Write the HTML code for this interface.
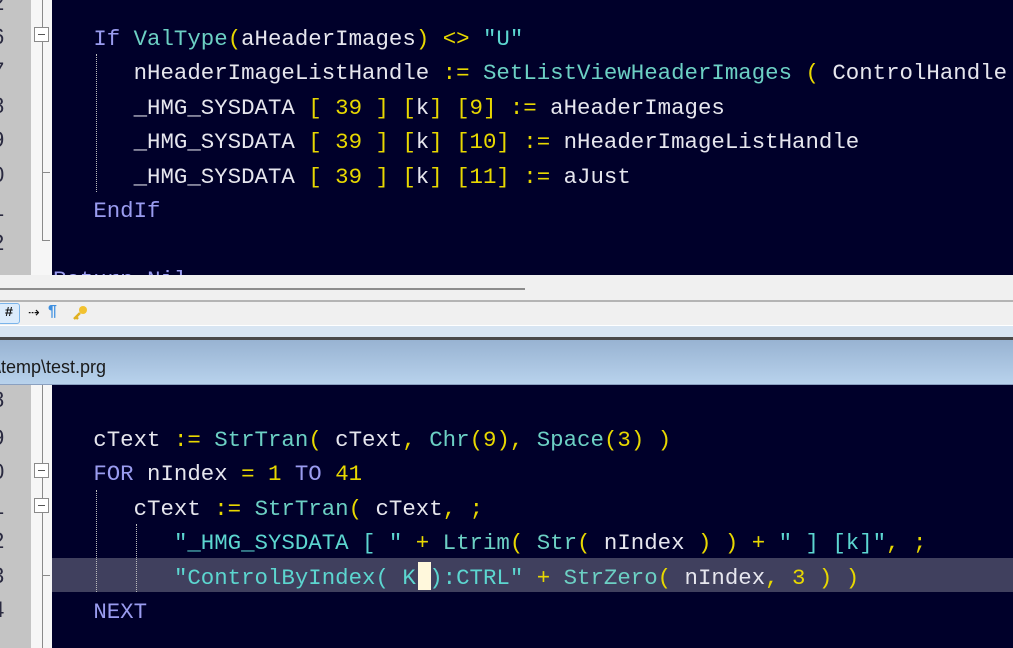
<!DOCTYPE html>
<html><head><meta charset="utf-8"><style>
*{margin:0;padding:0;box-sizing:border-box}
body{width:1013px;height:648px;overflow:hidden;position:relative;background:#f0f0f0;font-family:"Liberation Mono",monospace}
.ed{position:absolute;left:0;width:1013px;background:#00002a;overflow:hidden}
.gut{position:absolute;left:0;top:0;bottom:0;width:31px;background:#c4c4c4}
.fold{position:absolute;left:31px;top:0;bottom:0;width:21px;background:#f6f6f6}
.fl{position:absolute;left:42px;width:1px;background:#8a8a8a}
.fb{position:absolute;left:34px;width:15px;height:15px;border:1px solid #8a8a8a;background:#fff}
.fb:after{content:"";position:absolute;left:3px;top:6px;width:7px;height:1px;background:#555}
.tick{position:absolute;left:42px;width:8px;height:1px;background:#8a8a8a}
.ln{position:absolute;left:53px;height:34.4px;line-height:34.4px;font-size:22.4px;white-space:pre;color:#e6e6ee;margin-top:2px}
.num{position:absolute;left:-8px;font-size:22px;color:#2a2a40;line-height:34.4px;font-family:"Liberation Sans",sans-serif}
.k{color:#9a9cf0}.f{color:#6cd0c4}.o{color:#e8d800}.s{color:#5cd6d0}.n{color:#e8d800}
.g{position:absolute;width:0;border-left:1px dotted #bbb}
</style></head><body>

<div class="ed" style="top:0;height:275px">
  <div class="gut"></div><div class="fold"></div>
  <div class="fl" style="top:0;height:27px"></div>
  <div class="fb" style="top:27px"></div>
  <div class="fl" style="top:42px;height:198px"></div>
  <div class="tick" style="top:240px"></div>
  <div class="fl" style="top:172px;height:1px;width:8px"></div>
  <div class="num" style="top:-14px">2</div><div class="num" style="top:20px">6</div><div class="num" style="top:54px">7</div><div class="num" style="top:89px">8</div><div class="num" style="top:123px">9</div><div class="num" style="top:158px">0</div><div class="num" style="top:192px">1</div><div class="num" style="top:226px">2</div>
  <div class="g" style="left:96px;top:54px;height:138px"></div>
  <div class="ln" style="top:20px">   <span class="k">If</span> <span class="f">ValType</span><span class="o">(</span>aHeaderImages<span class="o">)</span> <span class="o">&lt;&gt;</span> <span class="s">"U"</span></div>
  <div class="ln" style="top:54.4px">      nHeaderImageListHandle <span class="o">:=</span> <span class="f">SetListViewHeaderImages</span> <span class="o">(</span> ControlHandle</div>
  <div class="ln" style="top:88.8px">      _HMG_SYSDATA <span class="o">[</span> <span class="n">39</span> <span class="o">]</span> <span class="o">[</span>k<span class="o">]</span> <span class="o">[</span><span class="n">9</span><span class="o">]</span> <span class="o">:=</span> aHeaderImages</div>
  <div class="ln" style="top:123.2px">      _HMG_SYSDATA <span class="o">[</span> <span class="n">39</span> <span class="o">]</span> <span class="o">[</span>k<span class="o">]</span> <span class="o">[</span><span class="n">10</span><span class="o">]</span> <span class="o">:=</span> nHeaderImageListHandle</div>
  <div class="ln" style="top:157.6px">      _HMG_SYSDATA <span class="o">[</span> <span class="n">39</span> <span class="o">]</span> <span class="o">[</span>k<span class="o">]</span> <span class="o">[</span><span class="n">11</span><span class="o">]</span> <span class="o">:=</span> aJust</div>
  <div class="ln" style="top:192px">   <span class="k">EndIf</span></div>
  <div class="ln" style="top:261px"><span class="k">Return</span> <span class="k">Nil</span></div>
</div>

<div style="position:absolute;left:0;top:288px;width:525px;height:2px;background:#8c8c8c"></div>
<div style="position:absolute;left:0;top:300px;width:1013px;height:2px;background:#b4b4b4"></div>
<div style="position:absolute;left:0;top:325px;width:1013px;height:1px;background:#fff"></div>
<div style="position:absolute;left:0;top:326px;width:1013px;height:11px;background:#d8e5f2"></div>
<div style="position:absolute;left:0;top:337px;width:1013px;height:3px;background:#4a4a4a"></div>
<div style="position:absolute;left:0;top:340px;width:1013px;height:45px;background:linear-gradient(#98b3d2,#b8d2ec);border-bottom:1px solid #8aa0c0"></div>
<div style="position:absolute;left:-4px;top:357px;font:18px 'Liberation Sans',sans-serif;color:#1a1a1a">\temp\test.prg</div>

<div style="position:absolute;left:-2px;top:303px;width:22px;height:21px;border:1px solid #7ab4ea;background:#dcecfc;border-radius:3px;font:bold 14px 'Liberation Mono',monospace;color:#111;text-align:center;line-height:19px">#</div>
<div style="position:absolute;left:28px;top:304px;font:14px 'Liberation Sans',sans-serif;color:#111">⇢</div>
<div style="position:absolute;left:48px;top:303px;font:bold 16px 'Liberation Sans',sans-serif;color:#3d8fe0">¶</div>
<svg style="position:absolute;left:72px;top:305px" width="16" height="16"><circle cx="11" cy="5" r="4" fill="#f2c230"/><path d="M8 8 L2 14 M4 12 L6 14" stroke="#e0b020" stroke-width="2.5"/></svg>

<div class="ed" style="top:385px;height:263px">
  <div class="gut"></div><div class="fold"></div>
  <div class="fl" style="top:0;height:78px"></div>
  <div class="fb" style="top:78px"></div>
  <div class="fl" style="top:93px;height:20px"></div>
  <div class="fb" style="top:113px"></div>
  <div class="fl" style="top:128px;height:135px"></div>
  <div class="tick" style="top:190px"></div>
  <div class="num" style="top:-2px">8</div><div class="num" style="top:36px">9</div><div class="num" style="top:70px">0</div><div class="num" style="top:105px">1</div><div class="num" style="top:139px">2</div><div class="num" style="top:174px">3</div><div class="num" style="top:208px">4</div>
  <div style="position:absolute;left:52px;top:173px;width:961px;height:34px;background:#40405e"></div>
  <div class="g" style="left:96px;top:105px;height:102px"></div>
  <div class="g" style="left:136px;top:139px;height:68px"></div>
  <div style="position:absolute;left:418px;top:177px;width:13px;height:28px;background:#fff8dc"></div>
  <div class="ln" style="top:36px">   cText <span class="o">:=</span> <span class="f">StrTran</span><span class="o">(</span> cText<span class="o">,</span> <span class="f">Chr</span><span class="o">(</span><span class="n">9</span><span class="o">),</span> <span class="f">Space</span><span class="o">(</span><span class="n">3</span><span class="o">)</span> <span class="o">)</span></div>
  <div class="ln" style="top:70.4px">   <span class="k">FOR</span> nIndex <span class="o">=</span> <span class="n">1</span> <span class="k">TO</span> <span class="n">41</span></div>
  <div class="ln" style="top:104.8px">      cText <span class="o">:=</span> <span class="f">StrTran</span><span class="o">(</span> cText<span class="o">,</span> <span class="o">;</span></div>
  <div class="ln" style="top:139.2px">         <span class="s">"_HMG_SYSDATA [ "</span> <span class="o">+</span> <span class="f">Ltrim</span><span class="o">(</span> <span class="f">Str</span><span class="o">(</span> nIndex <span class="o">)</span> <span class="o">)</span> <span class="o">+</span> <span class="s">" ] [k]"</span><span class="o">,</span> <span class="o">;</span></div>
  <div class="ln" style="top:173.6px">         <span class="s">"ControlByIndex( K ):CTRL"</span> <span class="o">+</span> <span class="f">StrZero</span><span class="o">(</span> nIndex<span class="o">,</span> <span class="n">3</span> <span class="o">)</span> <span class="o">)</span></div>
  <div class="ln" style="top:208px">   <span class="k">NEXT</span></div>
</div>
</body></html>
